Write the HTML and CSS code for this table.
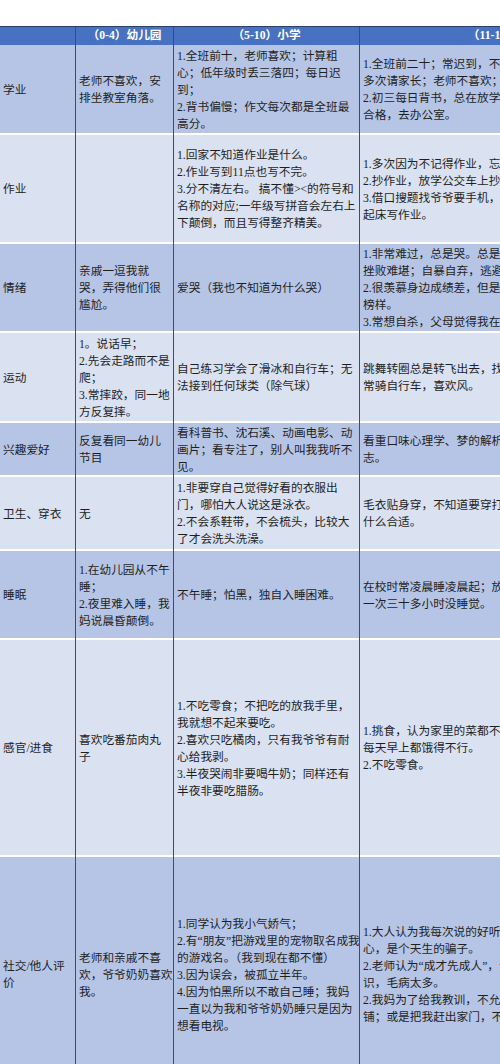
FILE: index.html
```html
<!DOCTYPE html>
<html lang="zh-CN">
<head>
<meta charset="utf-8">
<title>成长表现对照表</title>
<link rel="stylesheet" href="styles.css">
</head>
<body>
<div class="sheet">
  <div class="table">
    <div class="row head">
      <div class="cell"></div>
      <div class="cell">（0-4）幼儿园</div>
      <div class="cell">（5-10）小学</div>
      <div class="cell">（11-15）初中</div>
    </div>

    <div class="row dark">
      <div class="cell">学业</div>
      <div class="cell"><div>老师不喜欢，安<br>排坐教室角落。</div></div>
      <div class="cell"><div>1.全班前十，老师喜欢；计算粗<br>心；低年级时丢三落四；每日迟<br>到；<br>2.背书偏慢；作文每次都是全班最<br>高分。</div></div>
      <div class="cell"><div>1.全班前二十；常迟到，不交作业，<br>多次请家长；老师不喜欢；<br>2.初三每日背书，总在放学后背不<br>合格，去办公室。</div></div>
    </div>

    <div class="row light">
      <div class="cell">作业</div>
      <div class="cell"></div>
      <div class="cell"><div>1.回家不知道作业是什么。<br>2.作业写到11点也写不完。<br>3.分不清左右。 搞不懂&gt;&lt;的符号和<br>名称的对应;一年级写拼音会左右上<br>下颠倒，而且写得整齐精美。</div></div>
      <div class="cell"><div>1.多次因为不记得作业，忘带作业；<br>2.抄作业，放学公交车上抄作业。<br>3.借口搜题找爷爷要手机，早上<br>起床写作业。</div></div>
    </div>

    <div class="row dark">
      <div class="cell">情绪</div>
      <div class="cell"><div>亲戚一逗我就<br>哭，弄得他们很<br>尴尬。</div></div>
      <div class="cell"><div>爱哭（我也不知道为什么哭）</div></div>
      <div class="cell"><div>1.非常难过，总是哭。总是觉得<br>挫败难堪；自暴自弃，逃避现实；<br>2.很羡慕身边成绩差，但是快乐的<br>榜样。<br>3.常想自杀，父母觉得我在装。</div></div>
    </div>

    <div class="row light">
      <div class="cell">运动</div>
      <div class="cell"><div>1。说话早；<br>2.先会走路而不是<br>爬；<br>3.常摔跤，同一地<br>方反复摔。</div></div>
      <div class="cell"><div>自己练习学会了滑冰和自行车；无<br>法接到任何球类（除气球）</div></div>
      <div class="cell"><div>跳舞转圈总是转飞出去，找不到方向；<br>常骑自行车，喜欢风。</div></div>
    </div>

    <div class="row dark">
      <div class="cell">兴趣爱好</div>
      <div class="cell"><div>反复看同一幼儿<br>节目</div></div>
      <div class="cell"><div>看科普书、沈石溪、动画电影、动<br>画片；看专注了，别人叫我我听不<br>见。</div></div>
      <div class="cell"><div>看重口味心理学、梦的解析、悬疑杂<br>志。</div></div>
    </div>

    <div class="row light">
      <div class="cell">卫生、穿衣</div>
      <div class="cell"><div>无</div></div>
      <div class="cell"><div>1.非要穿自己觉得好看的衣服出<br>门，哪怕大人说这是泳衣。<br>2.不会系鞋带，不会梳头，比较大<br>了才会洗头洗澡。</div></div>
      <div class="cell"><div>毛衣贴身穿，不知道要穿打底衣，穿<br>什么合适。</div></div>
    </div>

    <div class="row dark">
      <div class="cell">睡眠</div>
      <div class="cell"><div>1.在幼儿园从不午<br>睡；<br>2.夜里难入睡，我<br>妈说晨昏颠倒。</div></div>
      <div class="cell"><div>不午睡；怕黑，独自入睡困难。</div></div>
      <div class="cell"><div>在校时常凌晨睡凌晨起；放假时曾<br>一次三十多小时没睡觉。</div></div>
    </div>

    <div class="row light">
      <div class="cell">感官/进食</div>
      <div class="cell"><div>喜欢吃番茄肉丸<br>子</div></div>
      <div class="cell"><div>1.不吃零食；不把吃的放我手里，<br>我就想不起来要吃。<br>2.喜欢只吃橘肉，只有我爷爷有耐<br>心给我剥。<br>3.半夜哭闹非要喝牛奶；同样还有<br>半夜非要吃腊肠。</div></div>
      <div class="cell"><div>1.挑食，认为家里的菜都不好吃，<br>每天早上都饿得不行。<br>2.不吃零食。</div></div>
    </div>

    <div class="row dark">
      <div class="cell"><div>社交/他人评<br>价</div></div>
      <div class="cell"><div>老师和亲戚不喜<br>欢，爷爷奶奶喜欢<br>我。</div></div>
      <div class="cell"><div>1.同学认为我小气娇气；<br>2.有“朋友”把游戏里的宠物取名成我<br>的游戏名。（我到现在都不懂）<br>3.因为误会，被孤立半年。<br>4.因为怕黑所以不敢自己睡；我妈<br>一直以为我和爷爷奶奶睡只是因为<br>想看电视。</div></div>
      <div class="cell"><div>1.大人认为我每次说的好听的都是假<br>心，是个天生的骗子。<br>2.老师认为“成才先成人”，说我没有常<br>识，毛病太多。<br>2.我妈为了给我教训，不允许我睡床<br>铺；或是把我赶出家门，不让我进。</div></div>
    </div>
  </div>
</div>
</body>
</html>
```

FILE: styles.css
```css
html, body {
  margin: 0;
  padding: 0;
  background: #ffffff;
}

body {
  font-family: "Liberation Serif", "Noto Sans CJK SC", serif;
  font-size: 11.7px;
  color: #1f1f1f;
}

.sheet {
  width: 500px;
  height: 1064px;
  overflow: hidden;
  padding-top: 26px;
  box-sizing: border-box;
}

.table {
  display: grid;
  width: 650px;
  grid-template-columns: 76px 98px 186px 290px;
  grid-template-rows: 18px 90px 109px 89px 90px 54px 74px 89px 217px 236px;
  border-top: 1px solid #2e3f66;
}

.row {
  display: contents;
}

.cell {
  display: flex;
  align-items: center;
  box-sizing: border-box;
  padding: 1px 2px 1px 3px;
  border-right: 1.5px solid #414b63;
  white-space: nowrap;
  overflow: hidden;
  line-height: 17px;
  background-image: linear-gradient(#ffffff, #ffffff);
  background-repeat: no-repeat;
  background-position: left bottom;
  background-size: 100% 2px;
}

.dark .cell {
  background-color: #b6c5e5;
}

.light .cell {
  background-color: #dae1f0;
}

.head .cell {
  justify-content: center;
  padding: 0;
  background-color: #4771c1;
  background-image: none;
  color: #ffffff;
  font-weight: bold;
  line-height: 18px;
}
```
